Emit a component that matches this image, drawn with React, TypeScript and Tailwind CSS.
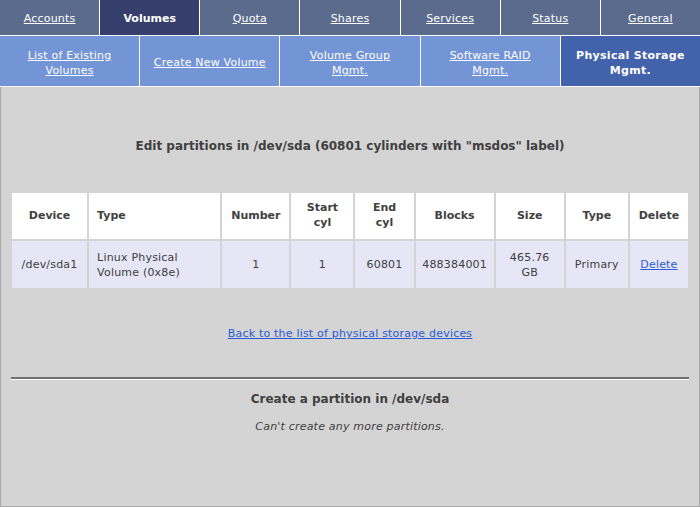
const topTabs = ['Accounts', 'Volumes', 'Quota', 'Shares', 'Services', 'Status', 'General']
const subTabs = [
  ['List of Existing', 'Volumes'],
  ['Create New Volume'],
  ['Volume Group', 'Mgmt.'],
  ['Software RAID', 'Mgmt.'],
  ['Physical Storage', 'Mgmt.'],
]

const headers = [
  { label: ['Device'], w: 'w-[75px]' },
  { label: ['Type'], w: 'w-[131px]', left: true },
  { label: ['Number'], w: 'w-[67px]' },
  { label: ['Start', 'cyl'], w: 'w-[62px]' },
  { label: ['End', 'cyl'], w: 'w-[58px]' },
  { label: ['Blocks'], w: 'w-[78px]' },
  { label: ['Size'], w: 'w-[68px]' },
  { label: ['Type'], w: 'w-[62px]' },
  { label: ['Delete'], w: 'w-[58px]' },
]

export default function App() {
  return (
    <div className="flex h-[507px] w-[700px] flex-col bg-white font-['DejaVu_Sans',Verdana,sans-serif] text-[11px] text-[#404040]">
      <nav className="grid h-[36px] grid-cols-7 gap-x-px border-b border-white bg-white">
        {topTabs.map((t) => (
          <div
            key={t}
            className={`flex items-center justify-center pt-[3px] ${
              t === 'Volumes'
                ? 'bg-[#363f6b] font-bold text-white'
                : 'bg-[#5b6b8c] tracking-[0.2px] text-white underline'
            }`}
          >
            {t}
          </div>
        ))}
      </nav>
      <nav className="grid h-[51px] grid-cols-5 gap-x-px border-b border-white bg-white">
        {subTabs.map((lines, i) => {
          const active = i === 4
          return (
            <div
              key={i}
              className={`flex flex-col items-center justify-center pt-[3px] leading-[15px] ${
                active ? 'bg-[#4262ab] font-bold tracking-[0.3px] text-white' : 'bg-[#7394d5] tracking-[0.2px] text-white'
              }`}
            >
              {lines.map((l) => (
                <span key={l} className={active ? '' : 'underline'}>
                  {l}
                </span>
              ))}
            </div>
          )
        })}
      </nav>

      <main className="flex flex-1 flex-col items-center border-x border-b border-[#a8a8a8] bg-[#d4d4d4] px-[10px]">
        <h2 className="mt-[50px] text-[12px] font-bold">
          Edit partitions in /dev/sda (60801 cylinders with "msdos" label)
        </h2>

        <table className="mt-[36px] w-[680px] border-separate border-spacing-[2px] text-center">
          <thead>
            <tr className="h-[46px] bg-white">
              {headers.map((h, i) => (
                <th
                  key={i}
                  className={`${h.w} px-[8px] pb-[2px] font-bold leading-[15px] ${h.left ? 'text-left' : ''}`}
                >
                  {h.label.map((l) => (
                    <div key={l}>{l}</div>
                  ))}
                </th>
              ))}
            </tr>
          </thead>
          <tbody>
            <tr className="h-[47px] bg-[#e6e6f6] leading-[15px] tracking-[0.2px]">
              <td>/dev/sda1</td>
              <td className="px-[8px] text-left">
                Linux Physical
                <br />
                Volume (0x8e)
              </td>
              <td>1</td>
              <td>1</td>
              <td>60801</td>
              <td>488384001</td>
              <td>
                465.76
                <br />
                GB
              </td>
              <td>Primary</td>
              <td>
                <a href="#" className="text-[#2a5ad7] underline">
                  Delete
                </a>
              </td>
            </tr>
          </tbody>
        </table>

        <a href="#" className="mt-[36px] tracking-[0.2px] text-[#2a5ad7] underline">
          Back to the list of physical storage devices
        </a>

        <hr className="mt-[34px] w-full border-t-2 border-b border-solid border-t-[#707070] border-b-white" />

        <h3 className="mt-[10px] text-[12px] font-bold">Create a partition in /dev/sda</h3>
        <p className="mt-[11px] tracking-[0.2px] italic">Can't create any more partitions.</p>
      </main>
    </div>
  )
}
